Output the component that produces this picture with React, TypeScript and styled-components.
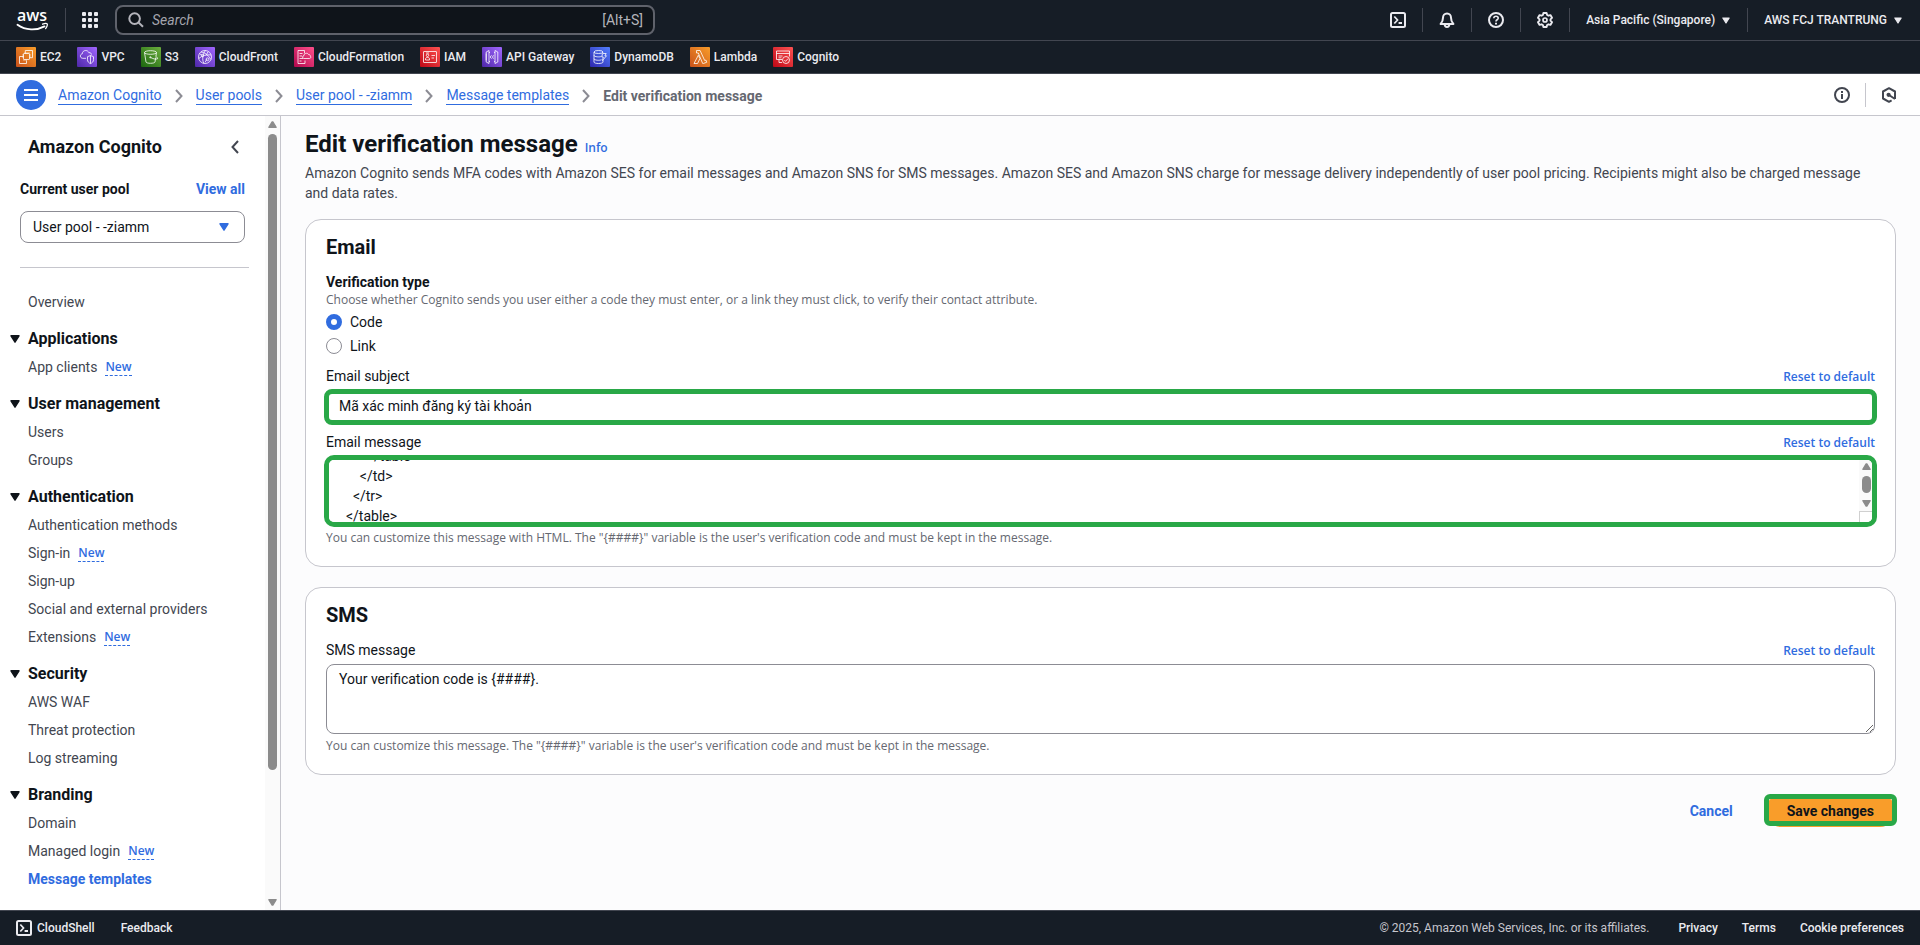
import React, { useLayoutEffect, useRef, useState } from 'react';
import styled, { createGlobalStyle, css } from 'styled-components';

const ui = 'Roboto, "Noto Sans", sans-serif';
const small = '"Open Sans", "Noto Sans", sans-serif';

const color = {
  blue: '#306cdf',
  ink: '#0f141a',
  body: '#424650',
  muted: '#656871',
  line: '#c6c6cd',
  control: '#8c8c94',
  bar: '#161d26',
  barLine: '#424650',
  barText: '#ebebf0',
  green: '#29a847',
  orange: '#f99d2a',
  scroll: '#8b8b8b',
};

const GlobalStyle = createGlobalStyle`
  *, *::before, *::after { box-sizing: border-box; }
  body { margin: 0; background: #fcfcfd; color: ${color.ink}; font: 400 14px/20px ${ui}; }
  button, input, select, textarea { font: inherit; color: inherit; }
  button { border: 0; padding: 0; background: none; cursor: pointer; }
  a { color: inherit; text-decoration: none; }
  h1, h2, p, ul, ol { margin: 0; padding: 0; }
  ul, ol { list-style: none; }
  svg { display: block; flex: none; }
`;

const Page = styled.div`
  min-height: 100vh;
  display: flex;
  flex-direction: column;
`;

/* ---------- top bars ---------- */

const TopBar = styled.header`
  display: flex;
  align-items: center;
  height: 41px;
  padding: 0 16px;
  background: ${color.bar};
  border-bottom: 1px solid ${color.barLine};
  color: ${color.barText};
  font-size: 12px;
  font-weight: 500;
`;

const VRule = styled.span<{ $light?: boolean }>`
  width: 1px;
  height: 24px;
  flex: none;
  background: ${p => (p.$light ? color.line : color.barLine)};
`;

const LogoLink = styled.a`
  margin-right: 16px;
`;

const GridButton = styled.button`
  margin: 0 17px 0 16px;
  color: ${color.barText};
`;

const SearchBox = styled.label`
  display: flex;
  align-items: center;
  gap: 8px;
  width: 540px;
  height: 30px;
  padding: 0 10px 0 11px;
  border: 2px solid #5f626b;
  border-radius: 8px;
  background: #0f141a;
  color: #b4b4bb;
  font-size: 14px;
  font-weight: 400;
`;

const SearchInput = styled.input`
  flex: 1;
  min-width: 0;
  border: 0;
  padding: 0;
  background: none;
  outline: none;
  &::placeholder { color: #a4a4ad; font-style: italic; opacity: 1; }
`;

const BarTools = styled.div`
  display: flex;
  align-items: center;
  margin-left: auto;
`;

const BarButton = styled.button`
  display: flex;
  align-items: center;
  gap: 7px;
  padding: 0 16px;
  white-space: nowrap;
`;

const MenuButton = styled(BarButton)`
  padding: 0 17px 0 16px;
  &:last-child { padding-right: 2px; }
`;

const ServiceBar = styled.nav`
  display: flex;
  align-items: center;
  gap: 16px;
  height: 33px;
  padding: 0 16px;
  background: ${color.bar};
  border-bottom: 1px solid ${color.barLine};
  color: ${color.barText};
  font-size: 12px;
  font-weight: 500;
`;

const ServiceLink = styled.a`
  display: flex;
  align-items: center;
  gap: 4px;
  white-space: nowrap;
`;

const CrumbBar = styled.div`
  display: flex;
  align-items: center;
  height: 42px;
  padding: 0 23px 0 16px;
  background: #fff;
  border-bottom: 1px solid ${color.line};
`;

const MenuToggle = styled.button`
  display: grid;
  place-items: center;
  width: 30px;
  height: 30px;
  margin-right: 12px;
  border-radius: 50%;
  background: ${color.blue};
  color: #fff;
`;

const Crumbs = styled.ol`
  display: flex;
  align-items: center;
  padding-top: 2px;
`;

const Crumb = styled.li`
  display: flex;
  align-items: center;
  color: ${color.muted};
  font-weight: 700;
  white-space: nowrap;
  svg { margin: 0 13px; color: #8c8c94; }
`;

const CrumbLink = styled.a`
  color: ${color.blue};
  font-weight: 400;
  line-height: 18px;
  border-bottom: 1px solid ${color.blue};
`;

const CrumbTools = styled.div`
  display: flex;
  align-items: center;
  gap: 15px;
  margin-left: auto;
  color: ${color.body};
`;

/* ---------- side navigation ---------- */

const Columns = styled.div`
  flex: 1;
  display: flex;
`;

const SideBar = styled.aside`
  display: flex;
  flex: none;
  width: 281px;
  background: #fff;
  border-right: 1px solid ${color.line};
`;

const SideContent = styled.div`
  flex: 1;
  padding: 19px 16px 16px 0;
`;

const SideTitleRow = styled.div`
  display: flex;
  align-items: center;
  justify-content: space-between;
  padding: 0 10px 0 28px;
  svg { color: ${color.body}; }
`;

const SideTitle = styled.a`
  font-size: 18px;
  line-height: 24px;
  font-weight: 700;
`;

const PoolPicker = styled.div`
  display: grid;
  grid-template-columns: 1fr auto;
  row-gap: 12px;
  margin: 20px 0 0 20px;
  padding: 0 4px 24px 0;
  border-bottom: 1px solid ${color.line};
  font-weight: 700;
`;

const BlueLink = styled.a`
  color: ${color.blue};
  font-weight: 700;
`;

const SelectWrap = styled.div`
  position: relative;
  grid-column: 1 / -1;
  svg { position: absolute; right: 16px; top: 12px; color: ${color.blue}; pointer-events: none; }
`;

const PoolSelect = styled.select`
  appearance: none;
  width: 100%;
  height: 32px;
  padding: 0 36px 0 12px;
  border: 1px solid ${color.control};
  border-radius: 8px;
  background: #fff;
  font-weight: 400;
`;

const NavTop = styled.div`
  margin-top: 20px;
`;

const NavItem = styled.a<{ $active?: boolean }>`
  display: flex;
  align-items: center;
  gap: 8px;
  height: 28px;
  padding-left: 28px;
  color: ${color.body};
  ${p => p.$active && css`color: ${color.blue}; font-weight: 700;`}
`;

const NewMark = styled.span`
  color: ${color.blue};
  font: 600 12px/16px ${small};
  border-bottom: 1px dashed ${color.blue};
`;

const NavHeading = styled.button`
  display: flex;
  align-items: center;
  gap: 8px;
  height: 24px;
  margin: 11px 0 2px;
  padding-left: 10px;
  font-size: 16px;
  font-weight: 700;
`;

const Track = styled.div`
  display: flex;
  flex-direction: column;
  align-items: center;
  gap: 6px;
  width: 15px;
  padding: 5px 0 4px;
  background: #fafafa;
  color: ${color.scroll};
  svg:last-child { margin-top: auto; }
`;

const Thumb = styled.span<{ $size: string }>`
  width: 9px;
  height: ${p => p.$size};
  border-radius: 5px;
  background: ${color.scroll};
`;

/* ---------- main form ---------- */

const Main = styled.main`
  flex: 1;
  min-width: 0;
  display: flex;
  flex-direction: column;
  padding: 13px 24px 24px;
`;

const TitleRow = styled.div`
  display: flex;
  align-items: baseline;
  gap: 7px;
`;

const Title = styled.h1`
  font-size: 24px;
  line-height: 30px;
`;

const SmallLink = styled.a`
  padding-top: 2px;
  color: ${color.blue};
  font: 600 12px/20px ${small};
`;

const Lead = styled.p`
  margin: 4px 0 16px;
  padding-right: 20px;
  color: ${color.body};
`;

const Card = styled.section`
  margin-bottom: 20px;
  padding: 16px 20px 20px;
  border: 1px solid ${color.line};
  border-radius: 16px;
  background: #fff;
`;

const CardTitle = styled.h2`
  margin-bottom: 14px;
  font-size: 20px;
  line-height: 22px;
`;

const RadioSet = styled.fieldset`
  display: flex;
  flex-direction: column;
  gap: 4px;
  margin: 0 0 10px;
  padding: 0;
  border: 0;
`;

const Legend = styled.legend`
  padding: 0;
  font-weight: 700;
`;

const Hint = styled.p`
  color: ${color.muted};
  font: 400 12px/16px ${small};
`;

const RadioLabel = styled.label`
  display: flex;
  align-items: center;
  gap: 8px;
`;

const Radio = styled.input`
  appearance: none;
  width: 16px;
  height: 16px;
  margin: 0;
  border: 1px solid ${color.control};
  border-radius: 50%;
  background: #fff;
  &:checked { border: 5px solid ${color.blue}; }
`;

const Field = styled.div`
  display: flex;
  flex-direction: column;
  gap: 4px;
  & + & { margin-top: 8px; }
`;

const FieldTop = styled.div`
  display: flex;
  align-items: center;
  justify-content: space-between;
  height: 20px;
`;

const marked = css`
  width: auto;
  margin: -1px -2px;
  border: 5px solid ${color.green};
`;

const TextInput = styled.input`
  height: 36px;
  padding: 0 10px 2px;
  border-radius: 8px;
  background: #fff;
  outline: none;
  ${marked}
`;

const TextBox = styled.textarea`
  display: block;
  width: 100%;
  height: 70px;
  padding: 4px 12px;
  border: 1px solid ${color.control};
  border-radius: 8px;
  background: #fff;
  outline: none;
`;

const ScrollFrame = styled.div`
  position: relative;
  height: 72px;
  overflow: hidden;
  border-radius: 10px;
  ${marked}
`;

const ScrollText = styled(TextBox)`
  height: 62px;
  padding: 4px 10px;
  border: 0;
  border-radius: 0;
  resize: none;
  scrollbar-width: none;
`;

const InnerScroll = styled.div`
  position: absolute;
  inset: 0 0 0 auto;
  width: 13px;
  display: flex;
  flex-direction: column;
`;

const InnerTrack = styled(Track)`
  flex: 1;
  width: 13px;
  padding: 3px 0 4px 2px;
`;

const Corner = styled.span`
  height: 11px;
  border: solid #d0d0d0;
  border-width: 1px 0 0 1px;
  background: #fff;
`;

const Actions = styled.div`
  display: flex;
  justify-content: flex-end;
  gap: 32px;
`;

const CancelButton = styled.button`
  color: ${color.blue};
  font-weight: 700;
`;

const SaveButton = styled.button`
  position: relative;
  height: 32px;
  padding: 0 22px;
  border-radius: 16px;
  background: ${color.orange};
  font-weight: 700;
  &::after {
    content: '';
    position: absolute;
    inset: -1px -1px 1px;
    border: 5px solid ${color.green};
    border-radius: 6px;
  }
`;

/* ---------- footer ---------- */

const Footer = styled.footer`
  display: flex;
  align-items: center;
  gap: 24px;
  height: 35px;
  padding: 0 16px;
  background: ${color.bar};
  border-top: 1px solid ${color.barLine};
  color: ${color.barText};
  font-size: 12px;
  font-weight: 500;
`;

const ShellButton = styled.button`
  display: flex;
  align-items: center;
  gap: 5px;
  padding-right: 2px;
`;

const Copyright = styled.span`
  margin-left: auto;
  padding-right: 5px;
  color: #c6c6cd;
  font-weight: 400;
`;

/* ---------- icons ---------- */

const Caret = ({ w = 10 }: { w?: number }) => (
  <svg width={w} height={w === 10 ? 8 : 7} viewBox="0 0 10 8" aria-hidden="true">
    <path d="M1 .8h8L5 7.2z" fill="currentColor" stroke="currentColor" strokeWidth="1.4" strokeLinejoin="round" />
  </svg>
);

const ArrowTip = ({ down }: { down?: boolean }) => (
  <svg width="9" height="7" viewBox="0 0 9 7" aria-hidden="true">
    <path
      d={down ? 'M.8.7h7.4L4.9 6.1h-.8z' : 'M.8 6.3h7.4L4.9.9h-.8z'}
      fill="currentColor" stroke="currentColor" strokeWidth="1.2" strokeLinejoin="round"
    />
  </svg>
);

const Chevron = ({ left }: { left?: boolean }) => (
  <svg width="8" height="14" viewBox="0 0 8 14" fill="none" stroke="currentColor" strokeWidth="2" aria-hidden="true">
    <path d={left ? 'M7 1L1.5 7 7 13' : 'M1 1l5.5 6L1 13'} />
  </svg>
);

const line = { fill: 'none', stroke: 'currentColor', strokeWidth: 2, strokeLinejoin: 'round' as const };

const ShellIcon = () => (
  <svg width="16" height="16" viewBox="0 0 16 16" {...line} aria-hidden="true">
    <rect x="1" y="1" width="14" height="14" rx="1.5" />
    <path d="M4.3 4.5L7.6 8l-3.3 3.5M8.6 11h3.4" strokeWidth="1.8" />
  </svg>
);

const BellIcon = () => (
  <svg width="16" height="16" viewBox="0 0 16 16" {...line} aria-hidden="true">
    <path d="M8 1.6c-2.4 0-4 1.8-4 4.1 0 3-.9 4.6-2.4 6.3h12.8C12.9 10.3 12 8.7 12 5.7c0-2.3-1.6-4.1-4-4.1z" />
    <path d="M5.6 12c.1 1.9 1 3 2.4 3s2.3-1.1 2.4-3" />
  </svg>
);

const HelpIcon = () => (
  <svg width="16" height="16" viewBox="0 0 16 16" {...line} aria-hidden="true">
    <circle cx="8" cy="8" r="7" />
    <path d="M5.8 6.3c0-1.3 1-2.1 2.2-2.1s2.2.8 2.2 2c0 1.5-2.2 1.6-2.2 3.2" strokeWidth="1.6" />
    <path d="M7 10.8h2v1.6H7z" fill="currentColor" stroke="none" />
  </svg>
);

const GearIcon = () => (
  <svg width="16" height="16" viewBox="0 0 16 16" {...line} strokeWidth="1.9" aria-hidden="true">
    <path d="M6.4 1h3.2l.5 2 1.3.7 2-.6L15 5.8l-1.5 1.5v1.4l1.5 1.5-1.600 2.700-2-.6-1.300.7-.5 2H6.400l-.5-2-1.300-.7-2 .6L1 10.200l1.500-1.500V7.300L1 5.800l1.600-2.700 2 .6L5.900 3z" />
    <circle cx="8" cy="8" r="2" strokeWidth="1.7" />
  </svg>
);

const InfoIcon = () => (
  <svg width="16" height="16" viewBox="0 0 16 16" {...line} aria-hidden="true">
    <circle cx="8" cy="8" r="7" />
    <path d="M8 7v5M8 4v2" />
  </svg>
);

const HexIcon = () => (
  <svg width="16" height="16" viewBox="0 0 16 16" {...line} aria-hidden="true">
    <path d="M10.6 13.4L8 14.8l-6-3.300v-7l6-3.300 6 3.300v7.500" />
    <circle cx="7.6" cy="7.8" r="2.1" fill="currentColor" stroke="none" />
    <path d="M8 8l6 4" />
  </svg>
);

const SearchIcon = () => (
  <svg width="16" height="16" viewBox="0 0 16 16" {...line} aria-hidden="true">
    <circle cx="6.6" cy="6.6" r="5.3" />
    <path d="M10.5 10.5l4.5 4.3" />
  </svg>
);

const GridIcon = () => (
  <svg width="16" height="16" viewBox="0 0 16 16" fill="currentColor" aria-hidden="true">
    {[0, 6, 12].flatMap(y => [0, 6, 12].map(x => <rect key={`${x}-${y}`} x={x} y={y} width="4" height="4" rx="1" />))}
  </svg>
);

const BurgerIcon = () => (
  <svg width="14" height="12" viewBox="0 0 14 12" stroke="currentColor" strokeWidth="2" aria-hidden="true">
    <path d="M0 1h14M0 6h14M0 11h14" />
  </svg>
);

const AwsLogo = () => (
  <svg width="33" height="36" viewBox="0 -8 33 36" role="img" aria-label="AWS home">
    <text x="1" y="11" fill="#fff" fontFamily="Open Sans, sans-serif" fontWeight="600" fontSize="16">aws</text>
    <path d="M1.5 14.8c8 5.7 19 6 27 1.6" fill="none" stroke="#fff" strokeWidth="1.9" strokeLinecap="round" />
    <path d="M26.6 14.2c2-.9 4.2-.8 4.6-.3.4.6-.1 3-1.6 4.7" fill="none" stroke="#fff" strokeWidth="1.3" strokeLinecap="round" />
  </svg>
);

type Service = { name: string; from: string; to: string; art: React.ReactNode };

const services: Service[] = [
  {
    name: 'EC2', from: '#c8511b', to: '#f99d2a',
    art: <><rect x="7.5" y="6.5" width="6" height="6" rx=".6" /><path d="M9.300 6.500V3.500h7.200v7.200h-3M9 5.300v1.200M11 5.300v1.200M13 5.300v1.200M13.500 8h1.200M13.500 10h1.200M6.300 8h1.200M6.300 10h1.200M8 12.500v1.200M10 12.500v1.200M7.500 9.500h-4v7h7v-3" /></>,
  },
  {
    name: 'VPC', from: '#4d27a8', to: '#a166ff',
    art: <><path d="M9 11.300H5.800c-1.500 0-2.400-1-2.400-2.300 0-1.200.8-2 1.900-2.200C5.300 4.700 7 3.500 8.700 3.500c1.500 0 2.600.8 3.200 2.200 1.700-.3 2.500.6 2.500 2" /><path d="M13.500 8.500l3 1.200v3c0 2-1.300 3.200-3 3.900-1.700-.7-3-1.900-3-3.900v-3zM13.500 8.500v8" /></>,
  },
  {
    name: 'S3', from: '#1b660f', to: '#6cae3e',
    art: <><ellipse cx="9.5" cy="5.5" rx="6" ry="1.8" /><path d="M3.500 5.500L5 15c.3 1.700 8.700 1.700 9 0l.7-4.500M15.500 5.500L15 9M9.300 10.300c2.500 1.500 5.500 2.300 7.200 1.500.7-1-1-2-2-2.500" /><circle cx="9.3" cy="10.3" r=".6" /></>,
  },
  {
    name: 'CloudFront', from: '#4d27a8', to: '#a166ff',
    art: <><circle cx="10" cy="10" r="6.5" /><path d="M6 5c3 .3 7 2.500 9.800 7.500M10.500 3.500C7.500 7 7 12 8.700 16.300M3.700 11.500c3.500-3 7.500-4 12.300-3.600M7 8.300L4.500 6.700M11.500 7.700l1.500-3M12 12l-2 3.300" /><circle cx="12.5" cy="12.3" r="1.4" /><circle cx="7.5" cy="8.5" r="1.2" /></>,
  },
  {
    name: 'CloudFormation', from: '#b0084d', to: '#ff4f8b',
    art: <path d="M10.500 6.500V3.500h-6.500v13h7v-3M5.500 6.500h3M5.500 9h2.500M5.500 11.500h3.500M5.500 14h2M9.700 11.500c-1.500-.3-1.500-2.700.3-3 .3-2.500 3.700-3 4.500-1 1.300-.2 1.800.7 1.700 1.500 1 .6.700 2.500-.7 2.500z" />,
  },
  {
    name: 'IAM', from: '#bd0816', to: '#ff5252',
    art: <><rect x="3.5" y="4.5" width="13" height="11" rx=".4" /><circle cx="7.5" cy="8.3" r="1.2" /><path d="M5.500 13v-1.500c0-1.300 4-1.300 4 0V13zM11.500 8.500h3.500M11.500 11h2.500M6 6h3" /></>,
  },
  {
    name: 'API Gateway', from: '#4d27a8', to: '#a166ff',
    art: <path d="M7 3.500L4.200 5v10L7 16.500zM4.200 6.500v7M13 3.500L15.800 5v10L13 16.500zM7 5.500h1M7 14.500h1M13 5.500h-1M13 14.500h-1M9.500 8.300L8.200 10l1.300 1.700M11.500 8.300L10.500 10l1 1.700" />,
  },
  {
    name: 'DynamoDB', from: '#2e27ad', to: '#527fff',
    art: <><ellipse cx="8.5" cy="5" rx="4.5" ry="1.5" /><path d="M4 5v10c0 2 9 2 9 0v-2M4 8.300c0 1.700 6 2 7.500 1M4 11.700c0 1.700 6 2 7.500 1M13 5v.5M12.500 6.500h3.700l-1.300 2.300h1.600l-4 4.700.8-3.500h-1.500z" /></>,
  },
  {
    name: 'Lambda', from: '#c8511b', to: '#f99d2a',
    art: <path d="M6.500 3.500h3.600l4.600 10 1.300-.4.700 2.200-3.400 1.200h-.6L8.300 6H6.500zM8.300 8.300l1.600 3.300-2.300 4.900H4z" />,
  },
  {
    name: 'Cognito', from: '#bd0816', to: '#ff5252',
    art: <><path d="M9 12.500H3.500v-8.500h13v5.500M3.500 6.500h13M5.500 9h4M5.500 10.800h3M6 12.500v3h3" /><circle cx="13" cy="13" r="3.5" /><path d="M11.300 13l1.300 1.400 2.300-2.700" /></>,
  },
];

const ServiceIcon = ({ s }: { s: Service }) => {
  const id = `g-${s.name.replace(' ', '')}`;
  return (
    <svg width="20" height="20" viewBox="0 0 20 20" aria-hidden="true">
      <linearGradient id={id} x1="0" y1="1" x2="1" y2="0">
        <stop offset="0" stopColor={s.from} />
        <stop offset="1" stopColor={s.to} />
      </linearGradient>
      <rect width="20" height="20" rx="1" fill={`url(#${id})`} />
      <g fill="none" stroke="#fff" strokeWidth=".8" strokeLinejoin="round">{s.art}</g>
    </svg>
  );
};

/* ---------- data ---------- */

const groups = [
  { title: 'Applications', items: [['App clients', true]] },
  { title: 'User management', items: [['Users'], ['Groups']] },
  {
    title: 'Authentication',
    items: [['Authentication methods'], ['Sign-in', true], ['Sign-up'], ['Social and external providers'], ['Extensions', true]],
  },
  { title: 'Security', items: [['AWS WAF'], ['Threat protection'], ['Log streaming']] },
  { title: 'Branding', items: [['Domain'], ['Managed login', true], ['Message templates']] },
] as { title: string; items: [string, boolean?][] }[];

const crumbs = ['Amazon Cognito', 'User pools', 'User pool - -ziamm', 'Message templates'];

const emailBody = [
  '        </table>',
  '      </td>',
  '    </tr>',
  '  </table>',
  '</body>',
  '</html>',
].join('\n');

const NavGroup = ({ title, items }: (typeof groups)[number]) => {
  const [open, setOpen] = useState(true);
  return (
    <>
      <NavHeading type="button" aria-expanded={open} onClick={() => setOpen(!open)}>
        <Caret />
        {title}
      </NavHeading>
      {open && (
        <ul>
          {items.map(([label, isNew]) => (
            <li key={label}>
              <NavItem href="#" $active={label === 'Message templates'}>
                {label}
                {isNew && <NewMark>New</NewMark>}
              </NavItem>
            </li>
          ))}
        </ul>
      )}
    </>
  );
};

export default function App() {
  const messageRef = useRef<HTMLTextAreaElement>(null);
  const [kind, setKind] = useState('Code');

  useLayoutEffect(() => {
    if (messageRef.current) messageRef.current.scrollTop = 18;
  }, []);

  return (
    <Page>
      <GlobalStyle />
      <TopBar>
        <LogoLink href="#"><AwsLogo /></LogoLink>
        <VRule />
        <GridButton type="button" aria-label="Services"><GridIcon /></GridButton>
        <SearchBox>
          <SearchIcon />
          <SearchInput type="search" placeholder="Search" aria-label="Search" />
          [Alt+S]
        </SearchBox>
        <BarTools>
          <BarButton type="button" aria-label="CloudShell"><ShellIcon /></BarButton>
          <VRule />
          <BarButton type="button" aria-label="Notifications"><BellIcon /></BarButton>
          <VRule />
          <BarButton type="button" aria-label="Help"><HelpIcon /></BarButton>
          <VRule />
          <BarButton type="button" aria-label="Settings"><GearIcon /></BarButton>
          <VRule />
          <MenuButton type="button">Asia Pacific (Singapore) <Caret w={8} /></MenuButton>
          <VRule />
          <MenuButton type="button">AWS FCJ TRANTRUNG <Caret w={8} /></MenuButton>
        </BarTools>
      </TopBar>

      <ServiceBar aria-label="Favorites">
        {services.map(s => (
          <ServiceLink href="#" key={s.name}><ServiceIcon s={s} />{s.name}</ServiceLink>
        ))}
      </ServiceBar>

      <CrumbBar>
        <MenuToggle type="button" aria-label="Toggle navigation"><BurgerIcon /></MenuToggle>
        <Crumbs>
          {crumbs.map(c => (
            <Crumb key={c}><CrumbLink href="#">{c}</CrumbLink><Chevron /></Crumb>
          ))}
          <Crumb>Edit verification message</Crumb>
        </Crumbs>
        <CrumbTools>
          <button type="button" aria-label="Info panel"><InfoIcon /></button>
          <VRule $light />
          <button type="button" aria-label="Amazon Q"><HexIcon /></button>
        </CrumbTools>
      </CrumbBar>

      <Columns>
        <SideBar>
          <SideContent>
            <SideTitleRow>
              <SideTitle href="#">Amazon Cognito</SideTitle>
              <button type="button" aria-label="Close navigation"><Chevron left /></button>
            </SideTitleRow>
            <PoolPicker>
              <label htmlFor="pool">Current user pool</label>
              <BlueLink href="#">View all</BlueLink>
              <SelectWrap>
                <PoolSelect id="pool"><option>User pool - -ziamm</option></PoolSelect>
                <Caret />
              </SelectWrap>
            </PoolPicker>
            <NavTop>
              <NavItem href="#">Overview</NavItem>
            </NavTop>
            {groups.map(g => <NavGroup key={g.title} {...g} />)}
          </SideContent>
          <Track>
            <ArrowTip />
            <Thumb $size="81%" />
            <ArrowTip down />
          </Track>
        </SideBar>

        <Main>
          <TitleRow>
            <Title>Edit verification message</Title>
            <SmallLink href="#">Info</SmallLink>
          </TitleRow>
          <Lead>
            Amazon Cognito sends MFA codes with Amazon SES for email messages and Amazon SNS for SMS messages. Amazon SES
            and Amazon SNS charge for message delivery independently of user pool pricing. Recipients might also be
            charged message and data rates.
          </Lead>

          <Card>
            <CardTitle>Email</CardTitle>
            <RadioSet>
              <Legend>Verification type</Legend>
              <Hint>
                Choose whether Cognito sends you user either a code they must enter, or a link they must click, to verify
                their contact attribute.
              </Hint>
              {['Code', 'Link'].map(k => (
                <RadioLabel key={k}>
                  <Radio type="radio" name="kind" checked={kind === k} onChange={() => setKind(k)} />
                  {k}
                </RadioLabel>
              ))}
            </RadioSet>
            <Field>
              <FieldTop>
                <label htmlFor="subject">Email subject</label>
                <SmallLink href="#">Reset to default</SmallLink>
              </FieldTop>
              <TextInput id="subject" type="text" defaultValue="Mã xác minh đăng ký tài khoản" />
            </Field>
            <Field>
              <FieldTop>
                <label htmlFor="message">Email message</label>
                <SmallLink href="#">Reset to default</SmallLink>
              </FieldTop>
              <ScrollFrame>
                <ScrollText id="message" ref={messageRef} defaultValue={emailBody} spellCheck={false} />
                <InnerScroll>
                  <InnerTrack>
                    <ArrowTip />
                    <Thumb $size="17px" />
                    <ArrowTip down />
                  </InnerTrack>
                  <Corner />
                </InnerScroll>
              </ScrollFrame>
              <Hint>
                You can customize this message with HTML. The "{'{####}'}" variable is the user's verification code and
                must be kept in the message.
              </Hint>
            </Field>
          </Card>

          <Card>
            <CardTitle>SMS</CardTitle>
            <Field>
              <FieldTop>
                <label htmlFor="sms">SMS message</label>
                <SmallLink href="#">Reset to default</SmallLink>
              </FieldTop>
              <TextBox id="sms" defaultValue="Your verification code is {####}." spellCheck={false} />
              <Hint>
                You can customize this message. The "{'{####}'}" variable is the user's verification code and must be
                kept in the message.
              </Hint>
            </Field>
          </Card>

          <Actions>
            <CancelButton type="button">Cancel</CancelButton>
            <SaveButton type="submit">Save changes</SaveButton>
          </Actions>
        </Main>
      </Columns>

      <Footer>
        <ShellButton type="button"><ShellIcon />CloudShell</ShellButton>
        <a href="#">Feedback</a>
        <Copyright>© 2025, Amazon Web Services, Inc. or its affiliates.</Copyright>
        <a href="#">Privacy</a>
        <a href="#">Terms</a>
        <a href="#">Cookie preferences</a>
      </Footer>
    </Page>
  );
}
